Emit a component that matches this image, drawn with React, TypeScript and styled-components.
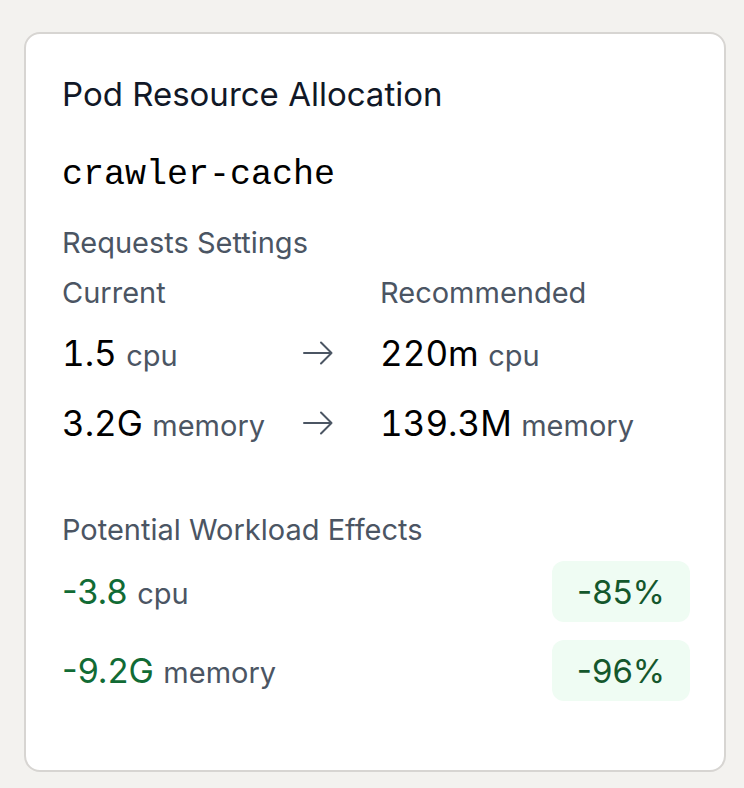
import React from "react";
import styled, { createGlobalStyle } from "styled-components";

// ---------------- Global ----------------

const GlobalStyle = createGlobalStyle`
  html, body {
    margin: 0;
    padding: 0;
    background-color: #f3f2ef;
  }
  body {
    font-family: Inter, Roboto, "Liberation Sans", Arial, sans-serif;
    -webkit-font-smoothing: antialiased;
  }
`;

// ---------------- Styled Components ----------------

const Page = styled.div`
  padding: 32px 18px 16px 24px;
`;

const Card = styled.section`
  box-sizing: border-box;
  width: 702px;
  height: 740px;
  background-color: #fff;
  border: 2px solid #d7d5d2;
  border-radius: 16px;
  padding: 36px 34px 36px 36px;
  display: flex;
  flex-direction: column;
`;

const Title = styled.h2`
  margin: 0;
  font-size: 33px;
  line-height: 48px;
  font-weight: 400;
  color: #111827;
`;

const PodName = styled.div`
  margin-top: 33px;
  font-family: "Liberation Mono", "DejaVu Sans Mono", monospace;
  font-size: 35px;
  line-height: 48px;
  color: #000;
`;

const SectionLabel = styled.div<{ $gap: number }>`
  margin-top: ${({ $gap }) => $gap}px;
  font-size: 29px;
  line-height: 40px;
  color: #4b5563;
`;

const Grid = styled.div`
  display: grid;
  grid-template-columns: 240px 78px 1fr;
  row-gap: 22px;
  align-items: center;
`;

const ColHead = styled.div`
  font-size: 29px;
  line-height: 40px;
  color: #4b5563;
`;

const HeadRow = styled(Grid)`
  margin-top: 10px;
`;

const ValueGrid = styled(Grid)`
  margin-top: 16px;
`;

const Value = styled.div<{ $tone?: "default" | "good" }>`
  line-height: 48px;
  white-space: nowrap;
  font-size: ${({ $tone }) => ($tone === "good" ? "34px" : "35px")};
  font-variant-numeric: ${({ $tone }) =>
    $tone === "good" ? "normal" : "tabular-nums"};
  color: ${({ $tone }) => ($tone === "good" ? "#116b35" : "#000")};
`;

const Unit = styled.span`
  font-size: 29px;
  line-height: 1;
  color: #4b5563;
`;

const ArrowCell = styled.div`
  display: flex;
  align-items: center;
  padding-left: 1px;
  color: #4b5563;
  height: 48px;
`;

const Effects = styled.div`
  margin-top: 11px;
  display: flex;
  flex-direction: column;
  gap: 18px;
`;

const EffectRow = styled.div`
  display: flex;
  align-items: center;
  justify-content: space-between;
`;

const Badge = styled.div`
  width: 138px;
  height: 61px;
  border-radius: 12px;
  background-color: #effcf3;
  color: #14572c;
  font-size: 33px;
  display: flex;
  align-items: center;
  justify-content: center;
`;

// ---------------- Icons ----------------

const Arrow = () => (
  <svg width="30" height="24" viewBox="0 0 30 24" fill="none">
    <path
      d="M1 12H28.5M18 1.5L28.5 12L18 22.5"
      stroke="currentColor"
      strokeWidth="2"
      strokeLinecap="round"
      strokeLinejoin="round"
    />
  </svg>
);

// ---------------- Data ----------------

const requests = [
  { current: "1.5", recommended: "220m", unit: "cpu" },
  { current: "3.2G", recommended: "139.3M", unit: "memory" },
];

const effects = [
  { delta: "-3.8", unit: "cpu", pct: "-85%" },
  { delta: "-9.2G", unit: "memory", pct: "-96%" },
];

// ---------------- Component ----------------

const App: React.FC = () => (
  <Page>
    <GlobalStyle />
    <Card>
      <Title>Pod Resource Allocation</Title>
      <PodName>crawler-cache</PodName>

      <SectionLabel $gap={24}>Requests Settings</SectionLabel>
      <HeadRow>
        <ColHead>Current</ColHead>
        <div />
        <ColHead>Recommended</ColHead>
      </HeadRow>
      <ValueGrid>
        {requests.map((r) => (
          <React.Fragment key={r.unit}>
            <Value>
              {r.current} <Unit>{r.unit}</Unit>
            </Value>
            <ArrowCell>
              <Arrow />
            </ArrowCell>
            <Value>
              {r.recommended} <Unit>{r.unit}</Unit>
            </Value>
          </React.Fragment>
        ))}
      </ValueGrid>

      <SectionLabel $gap={63}>Potential Workload Effects</SectionLabel>
      <Effects>
        {effects.map((e) => (
          <EffectRow key={e.unit}>
            <Value $tone="good">
              {e.delta} <Unit>{e.unit}</Unit>
            </Value>
            <Badge>{e.pct}</Badge>
          </EffectRow>
        ))}
      </Effects>
    </Card>
  </Page>
);

export default App;
